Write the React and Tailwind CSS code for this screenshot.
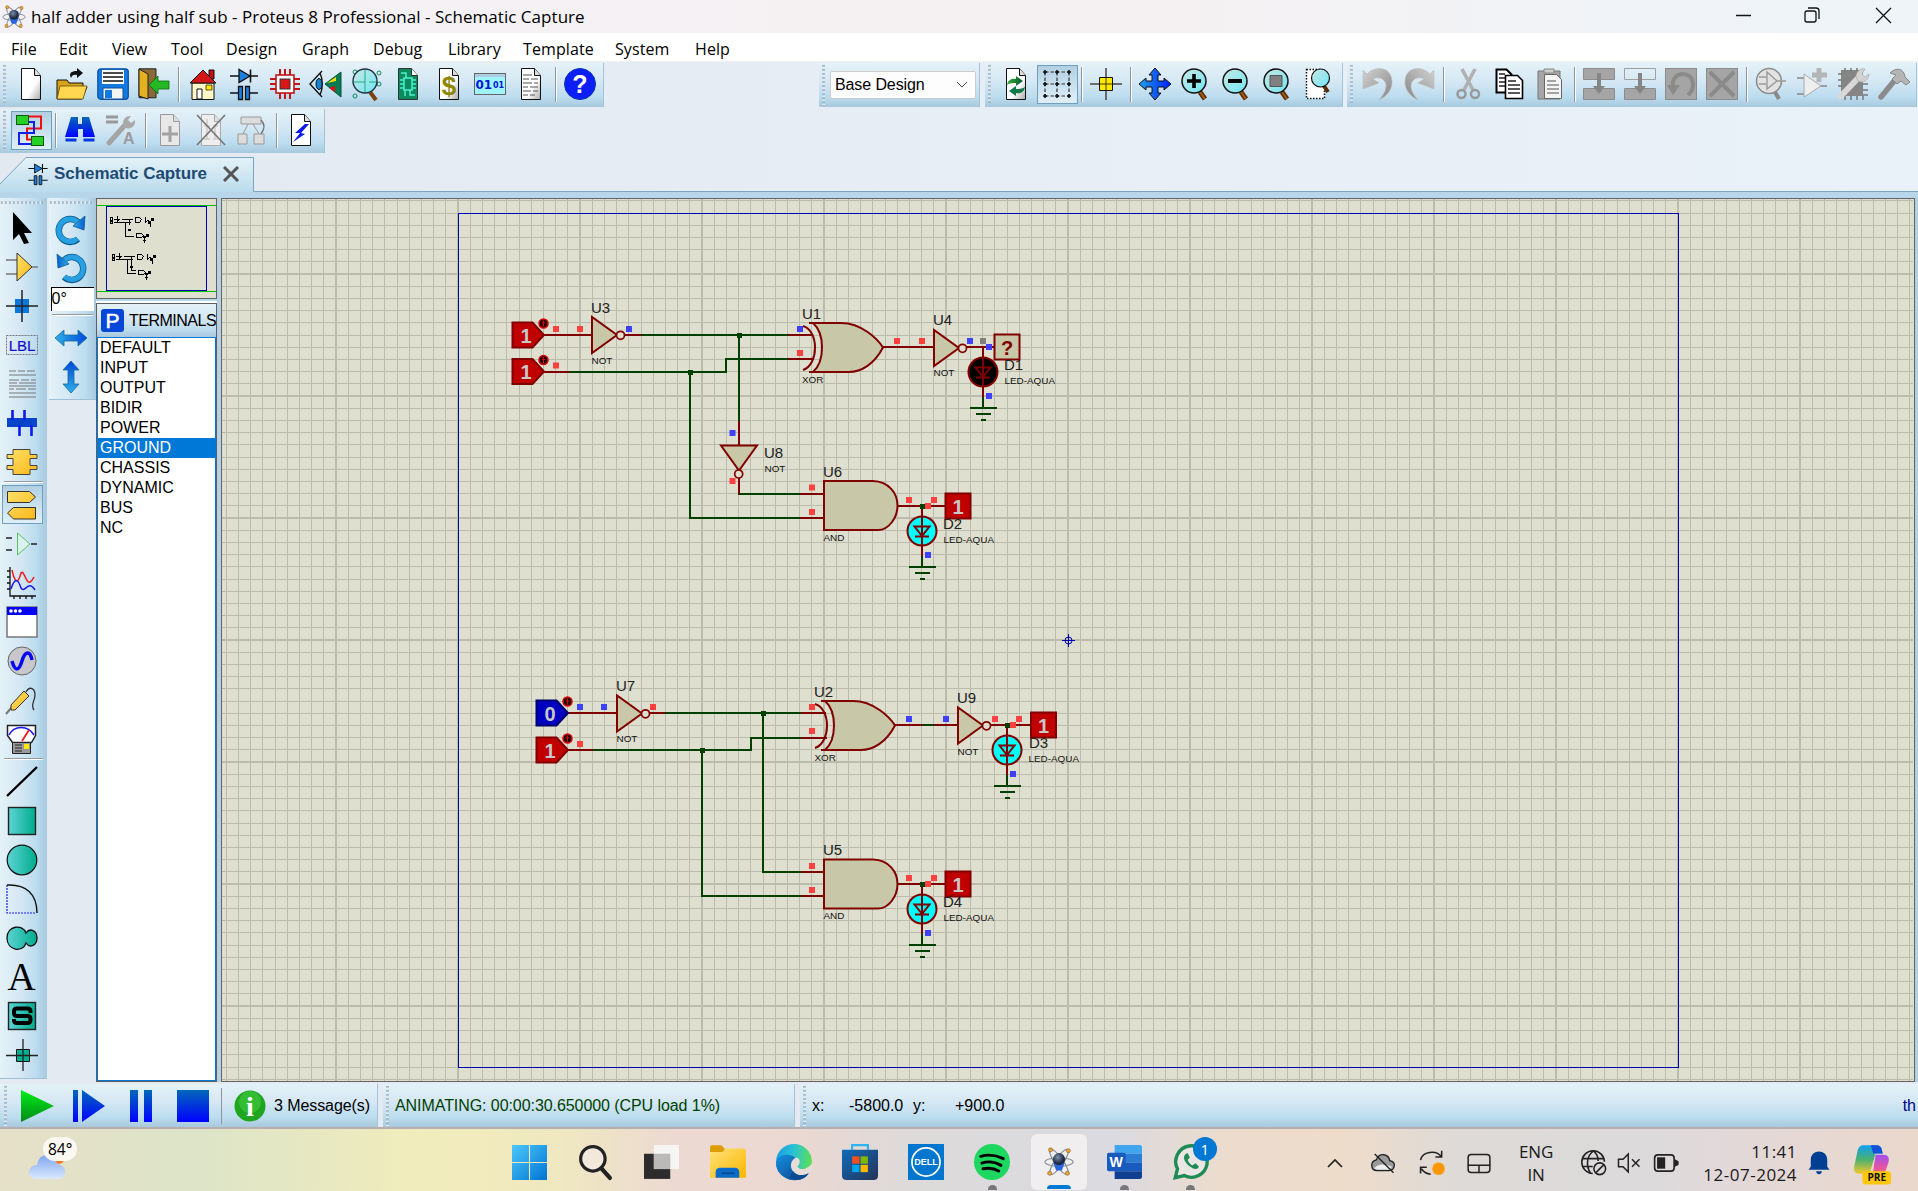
import React from "react";

const BAR_H = "bg-[linear-gradient(180deg,#e4f2f8_0%,#d6e8f4_40%,#bbdcef_78%,#a8c9dd_100%)]";
const BAR_V = "bg-[linear-gradient(90deg,#e4f2f8_0%,#d6e8f4_40%,#bbdcef_78%,#a8c9dd_100%)]";
const PRESSED = "bg-[linear-gradient(180deg,#b2cfe2_0%,#c4ddec_40%,#e0eff7_100%)] border border-[#6f9fbe]";

const Ic = ({ children, className = "w-8 h-8" }) => (
  <svg viewBox="0 0 32 32" className={className + " shrink-0 overflow-visible"} fill="none">{children}</svg>
);

const Defs = () => (
  <svg className="absolute w-0 h-0">
    <defs>
      <linearGradient id="page" x1="0" y1="0" x2="1" y2="1"><stop offset="0.6" stopColor="#fff" /><stop offset="1" stopColor="#aaa" /></linearGradient>
      <linearGradient id="yel" x1="0" y1="0" x2="1" y2="1"><stop offset="0" stopColor="#ffe169" /><stop offset="1" stopColor="#fbb81a" /></linearGradient>
      <linearGradient id="blu" x1="0" y1="0" x2="1" y2="0"><stop offset="0" stopColor="#1f9fe6" /><stop offset="1" stopColor="#0020ff" /></linearGradient>
      <linearGradient id="blv" x1="0" y1="0" x2="0" y2="1"><stop offset="0" stopColor="#0068b8" /><stop offset="1" stopColor="#0000ff" /></linearGradient>
      <linearGradient id="cyn" x1="0" y1="0" x2="1" y2="1"><stop offset="0" stopColor="#c8e8e6" /><stop offset="1" stopColor="#6fe6f2" /></linearGradient>
      <linearGradient id="teal" x1="0" y1="0" x2="1" y2="0"><stop offset="0" stopColor="#5dd3d3" /><stop offset="1" stopColor="#00ac8e" /></linearGradient>
      <linearGradient id="gry" x1="0" y1="0" x2="1" y2="1"><stop offset="0" stopColor="#d2d2d2" /><stop offset="1" stopColor="#858585" /></linearGradient>
      <linearGradient id="rot" x1="0" y1="0" x2="1" y2="0"><stop offset="0" stopColor="#2fb0ea" /><stop offset="1" stopColor="#0a5ccf" /></linearGradient>
      <linearGradient id="arh" x1="0" y1="0" x2="1" y2="0"><stop offset="0" stopColor="#2fb0e6" /><stop offset="1" stopColor="#0048dc" /></linearGradient>
      <linearGradient id="arv" x1="0" y1="1" x2="0" y2="0"><stop offset="0" stopColor="#2fb0e6" /><stop offset="1" stopColor="#0048dc" /></linearGradient>
      <linearGradient id="play" x1="0" y1="0" x2="0" y2="1"><stop offset="0" stopColor="#00ee18" /><stop offset="1" stopColor="#008a18" /></linearGradient>
      <linearGradient id="grn" x1="0" y1="0" x2="1" y2="0"><stop offset="0" stopColor="#3aae3c" /><stop offset="1" stopColor="#075a33" /></linearGradient>
      <radialGradient id="ball" cx="0.4" cy="0.35"><stop offset="0" stopColor="#7d92ab" /><stop offset="1" stopColor="#1b2942" /></radialGradient>
      <linearGradient id="win" x1="0" y1="0" x2="1" y2="1"><stop offset="0" stopColor="#4cc8fa" /><stop offset="1" stopColor="#0074d4" /></linearGradient>
      <linearGradient id="fold" x1="0" y1="0" x2="1" y2="1"><stop offset="0" stopColor="#ffe27a" /><stop offset="1" stopColor="#fbb600" /></linearGradient>
      <linearGradient id="edg" x1="0" y1="0.3" x2="1" y2="0.4"><stop offset="0" stopColor="#1b9de2" /><stop offset="0.5" stopColor="#2bc3d2" /><stop offset="1" stopColor="#5fe04f" /></linearGradient>
      <linearGradient id="edb" x1="0" y1="0" x2="1" y2="1"><stop offset="0" stopColor="#1590e0" /><stop offset="1" stopColor="#0b3f86" /></linearGradient>
      <linearGradient id="sto" x1="0" y1="0" x2="1" y2="1"><stop offset="0" stopColor="#0f6cbd" /><stop offset="1" stopColor="#263357" /></linearGradient>
      <linearGradient id="cop1" x1="0" y1="0" x2="0" y2="1"><stop offset="0" stopColor="#12a0f0" /><stop offset="0.5" stopColor="#49b170" /><stop offset="1" stopColor="#f7c72c" /></linearGradient>
      <linearGradient id="cop2" x1="0" y1="0" x2="0" y2="1"><stop offset="0" stopColor="#a24ff0" /><stop offset="0.6" stopColor="#e8559e" /><stop offset="1" stopColor="#f9824f" /></linearGradient>
      <linearGradient id="cld" x1="0" y1="0" x2="0" y2="1"><stop offset="0" stopColor="#7fa6ee" /><stop offset="1" stopColor="#dbe9ff" /></linearGradient>
    </defs>
  </svg>
);

const Page = ({ c = "#111", fill = "url(#page)", children }) => (
  <Ic><path d="M6.500 .5h13l6 7v24h-19z" fill={fill} stroke={c} /><path d="M19.500 .5v7h6" fill="#ddd" stroke={c} />{children}</Ic>
);

const Diode = ({ className }) => (
  <Ic className={className}>
    <path d="M2 8h28M22.500 1.500v13M2 25h8M22 25h8" stroke="#111" strokeWidth="1.600" />
    <path d="M11 1.500v13l11-6.500z" fill="#1c7fe0" stroke="#111" strokeWidth="1.300" />
    <path d="M10.500 18.500h4v13h-4zM17.500 18.500h4v13h-4z" fill="#1c7fe0" stroke="#111" strokeWidth="1.300" />
  </Ic>
);

const Zoom = ({ children }) => (
  <Ic><path d="M20 24l5 7" stroke="#5a2d00" strokeWidth="5" /><path d="M20 24l5 7" stroke="#a35a10" strokeWidth="2" /><circle cx="14" cy="13" r="12" fill="url(#cyn)" stroke="#111" strokeWidth="1.500" />{children}</Ic>
);

const Atom = ({ className }) => (
  <Ic className={className}>
    <g stroke="#8a8f98" strokeWidth="1.300"><ellipse cx="16" cy="16" rx="15" ry="4.500" /><ellipse cx="16" cy="16" rx="16" ry="4.500" transform="rotate(55 16 16)" /><ellipse cx="16" cy="16" rx="16" ry="4.500" transform="rotate(125 16 16)" /></g>
    <path d="M10 17h12l-3 8h-6z" fill="#2a66e0" /><circle cx="16" cy="13" r="6.500" fill="url(#ball)" />
    <g fill="#e8a33a" stroke="#7a4d10" strokeWidth=".5"><circle cx="7" cy="3" r="2.200" /><circle cx="26" cy="4" r="2.200" /><circle cx="6" cy="28" r="2.200" /><circle cx="25" cy="28" r="2.200" /></g>
  </Ic>
);

const Undo = ({ flip }) => (
  <Ic><g transform={flip ? "translate(32 0) scale(-1 1)" : undefined}><path d="M1 2v19l16-6-6-4c6-3 12 0 13 6 0 6-3 10-7 15 8-4 13-10 13-18 0-15-16-17-25-8z" fill="url(#gry)" stroke="#bdbdbd" strokeWidth=".6" /></g></Ic>
);

const Block = ({ children }) => (
  <Ic><rect x=".5" y=".5" width="31" height="31" fill="#a5a5a5" stroke="#8c8c8c" />{children}</Ic>
);

const icons = {
  new: <Page />,
  open: <Ic><path d="M1 31V12h10l2 3h14v4h4l-5 12z" fill="#d9a21c" stroke="#111" /><path d="M1 31l3-13h27l-4 13z" fill="#ffd750" stroke="#6a4a00" strokeWidth=".8" /><path d="M15 10c-3-6 2-7 6-7V0l6 5-6 5V7c-3-1-5 0-6 3z" fill="#111" /></Ic>,
  save: <Ic><rect x=".8" y=".8" width="30.500" height="30.500" rx="3" fill="#1179e0" stroke="#0a4fa0" strokeWidth="1.200" /><path d="M5 2h22v14H5z" fill="#fff" /><path d="M6 5h20M6 9h20M6 13h20" stroke="#111" strokeWidth="1.300" /><path d="M6 20h20v11H6z" fill="#f4f4f4" stroke="#0a4fa0" /><path d="M8 22h7v8H8z" fill="#1179e0" /></Ic>,
  exit: <Ic><path d="M1 .8h17v29H1z" fill="#8b6a3a" stroke="#222" /><path d="M1 1l9 5v25l-9-3z" fill="#e3b020" stroke="#222" /><path d="M11 17L20 8v5h11v8H20v5z" fill="#25b825" stroke="#0a6a0a" strokeWidth=".8" /></Ic>,
  house: <Ic><path d="M22 2h5v9h-5z" fill="#c01010" stroke="#111" /><path d="M5 15h22v16.500H5z" fill="#fff7c8" stroke="#111" /><path d="M3 15L16 2l13 13z" fill="#d41616" stroke="#111" /><path d="M10 21h5v10h-5z" fill="#fff" stroke="#111" /><path d="M19 17h6v5h-6z" fill="#ffe800" stroke="#111" strokeWidth=".7" /></Ic>,
  diode: <Diode />,
  chip: <Ic><path d="M11 1v30M16 1v30M21 1v30M1 11h30M1 16h30M1 21h30" stroke="#c01616" strokeWidth="2" /><rect x="7" y="7" width="18" height="18" fill="#fff" stroke="#c01616" strokeWidth="1.600" /><rect x="11" y="11" width="10" height="10" fill="#d81818" stroke="#333" /></Ic>,
  eye: <Ic><path d="M12 3L0 16l12 13M10 5c3 6 3 16 0 22" stroke="#111" strokeWidth="1.400" /><ellipse cx="9" cy="16" rx="3" ry="5.500" fill="#1584d8" stroke="#111" /><path d="M15 16L31 4v25z" fill="#0a7a52" stroke="#053" /><path d="M17 15l9-6v4z" fill="#f3e400" /><path d="M19 20l6-2v6z" fill="#e01010" /></Ic>,
  search: <Ic><g stroke="#0a8a5a"><circle cx="4" cy="28" r="2" /><circle cx="28" cy="5" r="2" /><circle cx="28" cy="16" r="2" /><circle cx="4" cy="4" r="2" /></g><path d="M19 24l6 8" stroke="#7a4310" strokeWidth="4" /><circle cx="14" cy="13" r="12" fill="url(#cyn)" stroke="#234" strokeWidth="1.400" /><path d="M3 14h11V2M14 14v10M18 14h7" stroke="#23a884" /></Ic>,
  green: <Ic><path d="M6.500 .5h13l6 7v24h-19z" fill="#0b8b5b" stroke="#333" /><path d="M19.500 .5v7h6" fill="#fff" stroke="#333" /><path d="M12 10h8v12h-8zM8 12h4M8 16h4M8 20h4M20 12h4M20 16h4M20 20h4M14 10V5h-5M18 22v5h5M13 22v6" stroke="#4ef0d0" strokeWidth="1.500" /></Ic>,
  dollar: <Page><text x="16" y="27" textAnchor="middle" className="font-bold text-[26px] [font-family:'Liberation_Sans',sans-serif]" fill="#8d8600">$</text></Page>,
  bits: <Ic><rect x=".5" y="5.500" width="31" height="21" fill="#9ff4fa" stroke="#666" /><path d="M1 6h30v3H1z" fill="#aecbe0" /><text x="1.500" y="21" className="font-bold text-[12px] [font-family:'DejaVu_Sans',sans-serif]" fill="#0014e0">01</text><text x="19" y="20" className="font-bold text-[8px] [font-family:'DejaVu_Sans',sans-serif]" fill="#0014e0">01</text></Ic>,
  text: <Page><path d="M8 7h9M8 11h6m2 0h7M8 15h9m2 0h4M8 19h5m2 0h8M8 23h8m2 0h5M8 27h5m2 0h5" stroke="#555" strokeWidth="1.200" /></Page>,
  help: <Ic><circle cx="16" cy="16" r="15.500" fill="#0c1df5" stroke="#0a38b0" /><text x="16" y="25" textAnchor="middle" className="font-bold text-[25px] [font-family:'Liberation_Sans',sans-serif]" fill="#fff">?</text></Ic>,
  route: <Ic><path d="M14 2.500h12v12H12v11h4" stroke="#f01010" strokeWidth="2" /><path d="M18 30H4V19h15V8H14" stroke="#1020f0" strokeWidth="2" /><rect x="1.500" y="1.500" width="12" height="9" fill="#25d125" stroke="#0a5a0a" /><rect x="16.500" y="22.500" width="12" height="9" fill="#25d125" stroke="#0a5a0a" /></Ic>,
  bino: <Ic><path d="M7 3h7v7h4V3h7l6 20H19V15h-5v8H1z" fill="url(#blv)" /><path d="M1 24h12v4H1zM19 24h12v4H19z" fill="#0637e6" stroke="#bfe2f2" strokeWidth="1" /></Ic>,
  wrench: <Ic><path d="M1 3h12M1 8h12" stroke="#999" strokeWidth="3" /><path d="M4 29L20 11" stroke="#a4a4a4" strokeWidth="5" strokeLinecap="round" /><path d="M19 13c-3-5 1-12 7-11l-3 4 3 3 4-3c1 6-5 11-11 7z" fill="#a9a9a9" /><text x="18" y="30" className="font-bold text-[16px] [font-family:'Liberation_Sans',sans-serif]" fill="#9b9b9b">A</text></Ic>,
  addpage: <Page c="#9a9a9a" fill="#e8e8e8"><path d="M16 12v16M8 20h16" stroke="#a2a2a2" strokeWidth="3" /></Page>,
  delpage: <Page c="#aaa" fill="#eee"><path d="M9 12h6m3 0h5M12 5v20M20 10v14M9 25h6m3 0h5" stroke="#bbb" /><path d="M2 1l28 30M30 1L2 31" stroke="#777" strokeWidth="1.700" /></Page>,
  hier: <Ic><g stroke="#999" fill="#dcdcdc"><path d="M5 3h20v7H5zM2 20h9v10H2zM18 20h10v10H18z" /><path d="M12 10L7 20M17 10l6 10" /></g><path d="M25 6c5 5 3 10 0 14" stroke="#777" strokeWidth="1.500" /></Ic>,
  bolt: <Page fill="#fff"><path d="M20 10l-10 9 5 0-7 9 12-8-4-1 8-9z" fill="#0a1af0" /></Page>,
  refresh: <Page><path d="M7 17c1-6 6-7 9-6V8l7 5-7 5v-3c-3 0-6 0-9 2z" fill="url(#grn)" /><path d="M25 19c-1 6-6 7-9 6v3l-7-5 7-5v3c3 0 6 0 9-2z" fill="#0f7a48" /></Page>,
  grid: <Ic><path d="M4 4h25M4 16h25M4 28h25M4 4v25M16 4v25M28 4v25" stroke="#333" strokeWidth="1.200" strokeDasharray="3.500 2" /><path d="M2 4h4M4 2v4M14 4h4M16 2v4M26 4h4M28 2v4M2 16h4M4 14v4M14 16h4M16 14v4M26 16h4M28 14v4M2 28h4M4 26v4M14 28h4M16 26v4M26 28h4M28 26v4" stroke="#111" strokeWidth="1.600" /></Ic>,
  cross: <Ic><path d="M0 16h32M16 0v32" stroke="#444" strokeWidth="1.500" /><path d="M9.500 9.500h13v13h-13z" fill="#ffe800" stroke="#111" /><path d="M9 16h14M16 9v14" stroke="#111" strokeWidth=".8" /></Ic>,
  move: <Ic><path d="M16 0l6 7h-3v6h6v-3l7 6-7 6v-3h-6v6h3l-6 7-6-7h3v-6H7v3l-7-6 7-6v3h6V7h-3z" fill="url(#blu)" stroke="#111" strokeWidth="1" /></Ic>,
  zin: <Zoom><path d="M7 13h14M14 6v14" stroke="#000" strokeWidth="3.600" /></Zoom>,
  zout: <Zoom><path d="M7 13h14" stroke="#000" strokeWidth="4" /></Zoom>,
  zall: <Zoom><path d="M8 7.500h12v11H8z" fill="#808080" stroke="#555" /></Zoom>,
  zarea: <Ic><path d="M3.500 1.500h18v29h-18z" fill="#fff" stroke="#111" strokeWidth="1.500" strokeDasharray="1.500 1.500" /><path d="M21 18l4 6" stroke="#5a2d00" strokeWidth="4" /><circle cx="17.500" cy="10" r="9" fill="url(#cyn)" stroke="#111" strokeWidth="1.200" /></Ic>,
  undo: <Undo />,
  redo: <Undo flip />,
  cut: <Ic><path d="M10 1l11 21M23 1L12 22" stroke="#b0b0b0" strokeWidth="3.500" /><circle cx="9.500" cy="26" r="4" stroke="#999" strokeWidth="2.500" /><circle cx="23" cy="26" r="4" stroke="#999" strokeWidth="2.500" /></Ic>,
  copy: <Ic><path d="M3.500 1.500h10l5 5v18h-15z" fill="#fff" stroke="#000" strokeWidth="2" /><path d="M6 6h6M6 10h6M6 14h6M6 18h6" stroke="#223" strokeWidth="1.500" /><path d="M12.500 7.500h12l5 5v18h-17z" fill="#fff" stroke="#000" strokeWidth="1.600" /><path d="M15 13h8M15 17h12M15 21h12M15 25h12" stroke="#222" strokeWidth="1.600" /></Ic>,
  paste: <Ic><path d="M4 3h22v28H4z" fill="#a6a6a6" stroke="#777" /><path d="M10 1h10v4H10z" fill="#ccc" stroke="#888" /><path d="M10.500 6.500h12l5 5v19h-17z" fill="#f4f4f4" stroke="#666" /><path d="M13 13h9M13 17h12M13 21h12M13 25h12" stroke="#888" strokeWidth="1.600" /></Ic>,
  bcopy: <Ic><path d="M.5.500h31v11H.5zM.5 20.500h31v11H.5z" fill="#a5a5a5" stroke="#8c8c8c" /><path d="M14 5h4v13h4l-6 8-6-8h4z" fill="#858585" /></Ic>,
  bmove: <Ic><path d="M.5.500h31v11H.5z" stroke="#a0a0a0" /><path d="M.5 20.500h31v11H.5z" fill="#a5a5a5" stroke="#8c8c8c" /><path d="M14 5h4v13h4l-6 8-6-8h4z" fill="#858585" /></Ic>,
  brot: <Block><path d="M8 19C5 3 28 1 28 17q0 6-5 10" stroke="#8a8a8a" strokeWidth="4" /><path d="M2 17h13l-7 10z" fill="#8a8a8a" /></Block>,
  bdel: <Block><path d="M4 4l24 24M28 4L4 28" stroke="#8a8a8a" strokeWidth="4" /></Block>,
  pick: <Ic><path d="M20 24l4 7" stroke="#8a8a8a" strokeWidth="4" /><circle cx="14" cy="13" r="12.500" fill="#e2e2e2" stroke="#8c8c8c" strokeWidth="1.500" /><path d="M4 9h7M4 16h7M21 13h10M12 4v17l10-8z" stroke="#999" strokeWidth="1.400" /></Ic>,
  mk: <Ic><path d="M1 10h7M1 26h7M24 18h7" stroke="#888" strokeWidth="1.500" /><path d="M8 6v23l17-11z" fill="#eee" stroke="#aaa" /><path d="M23 0v14M16 7h15" stroke="#b5b5b5" strokeWidth="5" /></Ic>,
  pack: <Ic><path d="M4 2h22v26H4z" fill="#858585" /><path d="M8 0v3M14 0v3M20 0v3M8 28v4M14 28v4M20 28v4M26 28v4M1 6h4M1 12h4M1 18h4M26 16h5M26 22h5M26 27h5" stroke="#777" strokeWidth="1.500" /><path d="M4 28L23 8" stroke="#d8d8d8" strokeWidth="6" strokeLinecap="round" /><path d="M19 9c0-6 5-9 9-8l-3 5 3 3 4-3c0 6-6 10-11 7z" fill="#d2d2d2" stroke="#999" strokeWidth=".5" /></Ic>,
  hammer: <Ic><path d="M17 12L3 29" stroke="#8b8b8b" strokeWidth="5.500" strokeLinecap="round" /><path d="M12 5c6-6 14-5 15 4l5 5-4 3-5-4-4 3-5-5 4-4z" fill="#b5b5b5" stroke="#888" /></Ic>,
};

const Grip = () => <span className="w-[11px] self-stretch my-px shrink-0 pl-[3px]"><span className="block w-[3px] h-full bg-[repeating-linear-gradient(180deg,#fff_0px,#8fa3b3_2px,transparent_3px,transparent_4px)]" /></span>;
const Sep = () => <span className="w-[8px] h-[35px] shrink-0 flex justify-center"><span className="w-[2px] h-full bg-[#8e969c] border-r border-white" /></span>;

const Bar = ({ names, pressed, className }) => (
  <div className={"flex items-center shrink-0 pb-[2px] border-r border-[#a3c3d7] " + BAR_H + " " + className}>
    <Grip />
    {names.map((n, i) => n === "|" ? <Sep key={i} /> : (
      <span key={i} className={"w-[41px] h-[39px] shrink-0 flex items-center justify-center pr-px " + (n === pressed ? PRESSED : "")}>{icons[n]}</span>
    ))}
  </div>
);

const side = {
  arrow: <Ic><path d="M7 0v28l6-6 5 10 5-1-5-10h8z" fill="#000" /></Ic>,
  comp: <Ic><path d="M0 9h11M0 23h11M24 16h8" stroke="#777" strokeWidth="1.600" /><path d="M11 2v28l15-14z" fill="url(#yel)" stroke="#333" /></Ic>,
  junc: <Ic><path d="M9 9h14v14H9z" fill="#0a78dc" /><path d="M0 16h32M16 0v32" stroke="#222" strokeWidth="1.500" /></Ic>,
  lbl: <Ic><rect x=".5" y="6.500" width="31" height="19" stroke="#777" strokeDasharray="2 1" /><text x="16" y="22" textAnchor="middle" className="text-[15px] [font-family:'Liberation_Sans',sans-serif]" fill="#1010c8" stroke="#1010c8" strokeWidth=".2">LBL</text></Ic>,
  script: <Ic><path d="M3 3h7m2 0h7m2 0h8M3 7h27M3 12h10m2 0h8m2 0h5M3 15h8m2 0h17M3 18h27M3 21h5m2 0h10m2 0h8M3 25h27M3 29h27" stroke="#777" strokeWidth="1.200" /></Ic>,
  bus: <Ic><path d="M1 11h30v9H1z" fill="#0845c8" /><path d="M6.500 3v10M18.500 3v10M13.500 18v11M25.500 18v11" stroke="#0a1af0" strokeWidth="2.600" /></Ic>,
  sub: <Ic><path d="M7 3.500h17v5h7v4h-7v7h7v4h-7v5H7v-5H1v-4h6v-7H1v-4h6z" fill="url(#yel)" stroke="#444" /></Ic>,
  term: <Ic><path d="M1.500 2.500h22l6 5.500-6 5.500h-22zM29.500 18.500h-22l-6 5.500 6 6h22z" fill="url(#yel)" stroke="#333" /></Ic>,
  pin: <Ic><path d="M0 10h6M0 22h6M25 16h6" stroke="#222" strokeWidth="1.600" /><path d="M11.500 5v22L24 16z" stroke="#55c865" fill="#ddf0ee" /></Ic>,
  graph: <Ic><path d="M4 0v29h26M1 4h3M1 10h3M1 16h3M1 22h3M8 29v3M14 29v3M20 29v3M26 29v3" stroke="#111" strokeWidth="1.300" /><path d="M6 3c3 14 6 14 9 3 3-4 5 11 9 9 2-1 3-3 4-5" stroke="#f01818" strokeWidth="1.500" /><path d="M5 22c4-12 7-10 10-1 4 6 7-9 14 2" stroke="#1818f0" strokeWidth="1.500" /></Ic>,
  window: <Ic><rect x="1" y="1" width="30" height="30" fill="#fff" stroke="#777" strokeWidth="1.500" /><path d="M1 1h30v8H1z" fill="#0404f4" /><g fill="#fff"><circle cx="5" cy="5" r="1.800" /><circle cx="9.500" cy="5" r="1.800" /><circle cx="14" cy="5" r="1.800" /></g></Ic>,
  sine: <Ic><circle cx="16" cy="16" r="14" fill="#c8c8cc" stroke="#666" /><path d="M6 16c3 11 7 10 10 0s8-11 10-1" stroke="#0808f4" strokeWidth="3.500" /></Ic>,
  probe: <Ic><path d="M0 30l6-7" stroke="#777" strokeWidth="2" /><path d="M5 21L18 7l5 5L9 26H5z" fill="url(#yel)" stroke="#333" /><path d="M20 8c4-7 9-3 9 3s-5 10-1 15" stroke="#333" strokeWidth="1.300" /></Ic>,
  meter: <Ic><path d="M1.500 2.500h28v10l-4 7h-19l-5-7z" fill="#fff" stroke="#222" strokeWidth="1.500" /><path d="M3 12C8 2 22 2 28 12" stroke="#1818f0" strokeWidth="1.500" /><path d="M16 18l7-11" stroke="#f01818" strokeWidth="1.800" /><path d="M6.500 19.500h18v11h-18z" fill="#999" stroke="#222" /><path d="M9 22h7M9 25h7M9 28h7" stroke="#222" /><path d="M18 21h5v5h-5z" fill="#ffe800" /></Ic>,
  line: <Ic><path d="M1 30L31 1" stroke="#000" strokeWidth="2.400" /></Ic>,
  box: <Ic><rect x="2.500" y="2.500" width="27" height="27" fill="url(#teal)" stroke="#222" strokeWidth="1.400" /></Ic>,
  circ: <Ic><circle cx="16" cy="16" r="14.800" fill="url(#teal)" stroke="#111" strokeWidth="1.200" /></Ic>,
  arc: <Ic><path d="M1 2v28h29" stroke="#2020e0" strokeWidth="1.200" strokeDasharray="2 1" /><path d="M1 2C20 1 31 11 31 30" stroke="#111" strokeWidth="1.400" /></Ic>,
  path: <Ic><path d="M20 11c-3-9-19-8-19 5s16 15 19 5c4 6 11 2 11-5s-7-11-11-5z" fill="url(#teal)" stroke="#111" strokeWidth="1.300" /></Ic>,
  A: <span className="text-[39px] leading-8 [font-family:'Liberation_Serif',serif] text-black">A</span>,
  S: <Ic><rect x="2.500" y="2.500" width="27" height="27" fill="url(#teal)" stroke="#222" strokeWidth="1.400" /><path d="M24.500 13v-2q0-2.500-3-2.500H11q-3 0-3 3v1.500q0 3 3 3h10.500q3 0 3 3v1q0 3-3 3H11q-3 0-3-3v-1" stroke="#000" strokeWidth="4" /></Ic>,
  mark: <Ic><path d="M10.500 10.500h13v12h-13z" fill="#00b090" stroke="#111" /><path d="M0 16.500h32M17 0v32" stroke="#222" strokeWidth="1.300" /></Ic>,
};
const sideNames = ["arrow", "comp", "junc", "lbl", "script", "bus", "sub", "-3", "term", "pin", "graph", "window", "sine", "probe", "meter", "-4", "line", "box", "circ", "arc", "path", "A", "S", "mark"];

/* ---- schematic ---- */
const R = "#800000";
const G = "#004000";
const seg = (d, c, k) => <path key={k} d={d} stroke={c} strokeWidth="2" fill="none" shapeRendering="crispEdges" />;
const T = ({ x, y, children }) => <text x={x} y={y} className="text-[15px] [font-family:'Liberation_Sans',sans-serif]" fill="#222">{children}</text>;
const S = ({ x, y, children }) => <text x={x} y={y} className="text-[9.900px] [font-family:'Liberation_Sans',sans-serif]" fill="#111">{children}</text>;
const Mk = ({ pts, c }) => pts.map(([x, y], i) => <rect key={i} x={x - 3} y={y - 3} width="6" height="6" fill={c} />);
const J = ({ x, y }) => <rect x={x - 2.500} y={y - 2.500} width="5" height="5" fill={G} />;

const State = ({ x, y, v }) => (
  <g>
    <path d={`M${x} ${y - 12.500}h20l11.500 12.500l-11.500 12.500h-20z`} fill={v ? "#c00000" : "#0000c0"} stroke={v ? R : "#000070"} strokeWidth="2" />
    <text x={x + 13.500} y={y + 7.500} textAnchor="middle" className="font-bold text-[20px] [font-family:'Liberation_Sans',sans-serif]" fill="#c8c8c8">{v}</text>
    <circle cx={x + 31} cy={y - 11.500} r="4.500" fill="#200000" stroke="#e00000" strokeWidth="1.500" />
    <path d={`M${x + 31} ${y - 14.500}v6M${x + 29.500} ${y - 12}h3`} stroke="#e00000" />
  </g>
);
const Not = ({ x, y }) => <g fill="#c8c8a8" stroke={R} strokeWidth="2"><path d={`M${x} ${y - 18}v36L${x + 25} ${y}z`} /><circle cx={x + 28.500} cy={y + 0.300} r="4" fill="#dfdfcf" strokeWidth="1.700" /></g>;
const Xor = ({ x, y }) => (
  <g stroke={R} strokeWidth="2">
    <path d={`M${x} ${y - 24.500}h32C${x + 53} ${y - 24.500} ${x + 69} ${y - 8} ${x + 74} ${y}C${x + 65} ${y + 17} ${x + 52} ${y + 24.500} ${x + 40} ${y + 24.500}h-40h4C${x + 16} ${y + 14} ${x + 16} ${y - 14} ${x + 4} ${y - 24.500}z`} fill="#c8c8a8" />
    <path d={`M${x - 6} ${y - 21.500}C${x + 10} ${y - 17} ${x + 10} ${y + 17} ${x - 6} ${y + 22.500}`} fill="none" />
  </g>
);
const And = ({ x, y }) => <path d={`M${x} ${y - 24.500}h49C${x + 65} ${y - 24} ${x + 73.500} ${y - 12} ${x + 73.500} ${y}S${x + 65} ${y + 24.500} ${x + 54} ${y + 24.500}h-54z`} fill="#c8c8a8" stroke={R} strokeWidth="2" />;
const Out = ({ x, y, v }) => (
  <g><rect x={x} y={y - 12.500} width="25" height="25" fill={v === "?" ? "#c8c8a8" : "#c00000"} stroke={R} strokeWidth="2" />
    <text x={x + 12.500} y={y + 7.500} textAnchor="middle" className="font-bold text-[20px] [font-family:'Liberation_Sans',sans-serif]" fill={v === "?" ? R : "#c8c8c8"}>{v}</text></g>
);
const Led = ({ x, y, on }) => (
  <g>
    {seg(`M${x} ${y}V${y + 51}`, R)}{seg(`M${x} ${y + 50}V${y + 61}`, G)}
    {seg(`M${x - 13.500} ${y + 61}h27M${x - 7.500} ${y + 67}h15M${x - 2.500} ${y + 73}h5`, G)}
    <circle cx={x} cy={y + 25} r="14.500" fill={on ? "#00ffff" : "#000"} stroke={R} strokeWidth="2" />
    <path d={`M${x} ${y + 8}v32M${x - 7.500} ${y + 20.500}h15l-7.500 9.500zM${x - 7} ${y + 30.500}h14`} stroke={R} strokeWidth="2" fill="none" />
    <Mk pts={[[x + 6, y + 49]]} c="#4040ff" />
    <S x={x + 21.500} y={y + 37}>LED-AQUA</S>
  </g>
);

const gridLines = () => {
  const out = [];
  for (let k = -70; k <= 70; k++) {
    const x = Math.round(1068 + 12.2 * k - 0.4), y = Math.round(640 + 12.2 * k - 0.4);
    const w = k % 10 === 0 ? 2 : 1;
    if (x > 222 && x < 1912) out.push(<rect key={"x" + k} x={w === 2 ? x - 1 : x} y="199" width={w} height="882" />);
    if (y > 199 && y < 1080) out.push(<rect key={"y" + k} y={w === 2 ? y - 1 : y} x="222" height={w} width="1691" />);
  }
  return out;
};

const Schematic = () => (
  <svg viewBox="222 199 1692 882" className="block w-[1692px] h-[882px]">
    <rect x="222" y="199" width="1692" height="882" fill="#dfdfcf" />
    <g fill="#bcbcac" shapeRendering="crispEdges">{gridLines()}</g>
    <rect x="458.500" y="213.500" width="1220" height="854" fill="none" stroke="#0000b0" />
    <g stroke="#0000b0" fill="none"><circle cx="1068.500" cy="640.500" r="3.500" /><path d="M1062 640.500h13M1068.500 634v13" /></g>

    {seg("M543 335H592M625 335H642M787 335H813M543 372H569M787 359H814M739 420V445M739 478V495M799 494H824M799 518H824M883 347H934M967 347H995M897 506H946", R)}
    {seg("M641 335H788M569 372H727M726 373V359M725 359H788M739 335V421M739 494H800M690 372V519M689 518H800", G)}
    <J x={739.500} y={335.500} /><J x={690.500} y={372.500} />
    <State x={512.500} y={335} v={1} /><State x={512.500} y={371.500} v={1} />
    <Not x={592} y={335} /><Xor x={809} y={347.500} /><Not x={934} y={348} /><And x={824} y={505.500} />
    <g transform="translate(739 445.500) rotate(90)"><Not x={0} y={0} /></g>
    <Led x={983} y={347} /><Led x={922} y={506} on />
    <J x={922.500} y={506.500} />
    <Out x={994.500} y={347} v="?" /><Out x={945.500} y={506} v="1" />
    <Mk c="#ff4040" pts={[[556, 329], [580, 329], [556, 365.500], [732.500, 481], [800, 353], [897, 341], [922, 341], [812, 487.500], [812, 512], [909, 500], [934, 500], [928, 506]]} />
    <Mk c="#4040ff" pts={[[629, 329], [732.500, 433], [800, 329], [970, 341], [989, 347]]} />
    <Mk c="#808080" pts={[[983, 341]]} />
    <T x="591" y="313">U3</T><S x="591.500" y="364">NOT</S>
    <T x="802" y="319">U1</T><S x="802" y="383">XOR</S>
    <T x="933" y="325">U4</T><S x="933.500" y="376">NOT</S>
    <T x="764" y="458">U8</T><S x="764.500" y="472">NOT</S>
    <T x="823" y="477">U6</T><S x="823.500" y="541">AND</S>
    <T x="1004" y="370">D1</T><T x="943" y="529">D2</T>

    {seg("M568 713H617M650 713H665M800 713H826M568 750H593M800 738H827M800 872H824M800 896H824M895 725H922M934 725H959M991 725H1031M897 884H946", R)}
    {seg("M665 713H801M593 750H752M751 751V738M750 738H801M763 713V873M762 872H801M702 750V897M701 896H801M922 725H934", G)}
    <J x={763.500} y={713.500} /><J x={702.500} y={750.500} />
    <State x={536.500} y={713} v={0} /><State x={536.500} y={750} v={1} />
    <Not x={617} y={713.500} /><Xor x={821} y={725.500} /><Not x={958} y={725.500} /><And x={824} y={884} />
    <Led x={1007} y={725} on /><Led x={922} y={884} on />
    <J x={1007.500} y={725.500} /><J x={922.500} y={884.500} />
    <Out x={1031} y={725} v="1" /><Out x={945.500} y={884} v="1" />
    <Mk c="#ff4040" pts={[[653, 707], [580, 744], [812, 707], [812, 731], [995, 719], [1019, 719], [1013, 725], [812, 866], [812, 890], [909, 878], [934, 878], [928, 884]]} />
    <Mk c="#4040ff" pts={[[580, 707], [604, 707], [909, 719], [946, 719]]} />
    <T x="616" y="691">U7</T><S x="616.500" y="742">NOT</S>
    <T x="814" y="697">U2</T><S x="814.500" y="761">XOR</S>
    <T x="957" y="703">U9</T><S x="957.500" y="755">NOT</S>
    <T x="823" y="855">U5</T><S x="823.500" y="919">AND</S>
    <T x="1029" y="748">D3</T><T x="943" y="907">D4</T>
  </svg>
);

const Mini = () => (
  <svg viewBox="0 0 119 99" className="block w-[119px] h-[99px]">
    <rect width="119" height="99" fill="#dfdfcf" />
    <path d="M0 6.500h119M0 92.500h119" stroke="#00c000" />
    <rect x="9.500" y="7.500" width="100" height="84" fill="none" stroke="#0000b0" />
    {[[0, 0], [2, 37]].map(([dx, dy], i) => (
      <g key={i} transform={`translate(${dx} ${dy})`} stroke="#000" fill="none" shapeRendering="crispEdges">
        <path d="M13.500 18.500h2v3h-2zM13.500 22.500h2v2h-2zM17 20.500h5M25 20.500h11M17 23.500h17M20.500 17v5l2-2M28.500 24v13h8M32.500 21v5M38.500 18.500h4l2 2-2 3h-4zM39.500 34.500h5l2 2-2 2h-5zM48.500 18v5l3-2M47.500 38v6M46 41.500h3M53.500 22v6" />
        <path d="M54 19h3v3h-3zM51 22h3v3h-3zM49 35h3v3h-3zM46 37h3v2h-3zM31 30h3v2h-3z" fill="#000" stroke="none" />
        {i === 1 && <path d="M32.500 21v13h4" />}
      </g>
    ))}
  </svg>
);

const Rot = ({ flip }) => (
  <Ic><g transform={flip ? "translate(32 0) scale(-1 1)" : undefined}><path d="M23 25a11.500 11.500 0 1 1 0-17" stroke="#0a5a90" strokeWidth="6.400" /><path d="M18 12l11 4 1-14z" fill="url(#rot)" stroke="#0a5a90" strokeWidth=".8" /><path d="M22.500 24.500a11.200 11.200 0 1 1 0-16.500" stroke="#289fe0" strokeWidth="5" /></g></Ic>
);

const menus = [["File", "w-[48px]"], ["Edit", "w-[53px]"], ["View", "w-[59px]"], ["Tool", "w-[55px]"], ["Design", "w-[76px]"], ["Graph", "w-[71px]"], ["Debug", "w-[75px]"], ["Library", "w-[75px]"], ["Template", "w-[92px]"], ["System", "w-[80px]"], ["Help", "w-[60px]"]];
const terminals = ["DEFAULT", "INPUT", "OUTPUT", "BIDIR", "POWER", "GROUND", "CHASSIS", "DYNAMIC", "BUS", "NC"];

const tasks = [
  [<Ic className="w-[35px] h-[35px]"><path d="M0 0h15.500v15.500H0zM16.500 0H32v15.500H16.500zM0 16.500h15.500V32H0zM16.500 16.500H32V32H16.500z" fill="url(#win)" /></Ic>],
  [<Ic className="w-[34px] h-[34px]"><circle cx="14" cy="13" r="11.500" fill="#f2e9dc" stroke="#222" strokeWidth="3" /><path d="M22 22l8 9" stroke="#222" strokeWidth="4" strokeLinecap="round" /></Ic>],
  [<Ic className="w-[35px] h-[35px]"><path d="M0 8h24v23H0z" fill="#2c2c2c" /><path d="M9 0h23v22H9z" fill="#f6f6f6" fillOpacity=".93" /><path d="M9 8h15v14H9z" fill="#bcbab8" /></Ic>],
  [<Ic className="w-[36px] h-[36px]"><path d="M0 3q0-2 2-2h8l3 3v5H0z" fill="#dd9c00" /><path d="M0 7h11l3-3h16q2 0 2 2v24H0z" fill="url(#fold)" /><path d="M5 30v-5q0-4 4-4h13q4 0 4 4v5z" fill="#0a6cc8" /><path d="M10 26h12" stroke="#084a90" strokeWidth="1.500" /></Ic>],
  [<Ic className="w-[36px] h-[36px]"><circle cx="16" cy="16" r="16" fill="url(#edg)" /><path d="M0 17C1 8 14 8 18 13c-4 1-6 6-3 11 3 4 9 5 14 2-5 7-15 8-22 3-5-3-7-8-7-12z" fill="url(#edb)" /><path d="M18 12c4 1 4 5 1 8 1 3 8 4 13-3l1 6-4 3c-5 3-11 2-14-2s-2-10 3-12z" fill="#e8dcd6" /><path d="M15 24c4 6 12 3 14 2-4 7-12 7-17 4z" fill="#0c4a94" /></Ic>],
  [<Ic className="w-[36px] h-[36px]"><path d="M9 5V1h14v4" stroke="#2cb5f0" strokeWidth="2" /><path d="M0 5h32v23q0 4-4 4H4q-4 0-4-4z" fill="url(#sto)" /><path d="M9 11h6.500v6.500H9z" fill="#f25022" /><path d="M16.500 11H23v6.500h-6.500z" fill="#7fba00" /><path d="M9 18.500h6.500V25H9z" fill="#00a4ef" /><path d="M16.500 18.500H23V25h-6.500z" fill="#ffb900" /></Ic>],
  [<Ic className="w-[36px] h-[36px]"><path d="M0 0h32v32H0z" fill="#0076ce" /><circle cx="16" cy="16" r="12.500" stroke="#fff" strokeWidth="1.500" /><text x="16" y="19" textAnchor="middle" className="font-bold text-[8px] [font-family:'Liberation_Sans',sans-serif]" fill="#fff">DELL</text></Ic>],
  [<Ic className="w-[36px] h-[36px]"><circle cx="16" cy="16" r="16" fill="#1ed760" /><path d="M6 11c7-2 14-1 20 2M7 17c6-2 12-1 17 2M8 22c5-1 9-1 14 2" stroke="#000" strokeWidth="2.600" strokeLinecap="round" /></Ic>, "dot"],
  [<Atom className="w-[34px] h-[30px]" />, "active"],
  [<Ic className="w-[35px] h-[35px]"><path d="M7 0h23q2 0 2 2v6H7z" fill="#41a5ee" /><path d="M7 8h25v8H7z" fill="#2b7cd3" /><path d="M7 16h25v8H7z" fill="#185abd" /><path d="M7 24h25v5q0 2-2 2H7z" fill="#103f91" /><rect x="0" y="7" width="17" height="17" rx="1.500" fill="#185abd" /><text x="8.500" y="20" textAnchor="middle" className="font-bold text-[13px] [font-family:'Liberation_Sans',sans-serif]" fill="#fff">W</text></Ic>, "dot"],
  [<Ic className="w-[36px] h-[36px]"><path d="M2 30l2-8A14 14 0 1 1 10 28z" fill="#e9e6e4" stroke="#1f8b55" strokeWidth="3" /><path d="M11 9c-3 3 0 8 4 11 4 3 7 3 8 0l-3-3-3 2c-2-1-3-3-4-5l2-2-2-4z" fill="#1f8b55" /></Ic>, "badge"],
];

export default function App() {
  return (
    <div className="w-[1918px] h-[1191px] flex flex-col overflow-hidden bg-[#e4eaf1] text-black [font-family:'Liberation_Sans',Arial,sans-serif]">
      <Defs />
      <div className="h-[33px] shrink-0 flex items-center bg-[linear-gradient(90deg,#f4f1f6_0%,#f5f1f2_60%,#f0f3f7_85%,#eef4f8_100%)]">
        <Atom className="w-6 h-[26px] ml-[2px]" />
        <span className="ml-[5px] text-[17px] whitespace-nowrap tracking-[0.04px] [font-family:'Open_Sans',sans-serif]">half adder using half sub - Proteus 8 Professional - Schematic Capture</span>
        <svg viewBox="0 0 170 20" className="ml-auto mr-[26px] w-[170px] h-5 mb-px" fill="none" stroke="#111" strokeWidth="1.300">
          <path d="M14 9.500h15M154 2l15 15M169 2l-15 15" /><rect x="83" y="5" width="11" height="11" rx="2" /><path d="M86 2h8q3 0 3 3v8" />
        </svg>
      </div>
      <div className="h-[28px] shrink-0 flex items-center bg-white pl-[11px] pt-[3px] text-[16px] tracking-[0.1px] [font-family:'Open_Sans',sans-serif]">
        {menus.map(([m, w]) => <span key={m} className={w + " shrink-0"}>{m}</span>)}
      </div>

      <div className="h-[46px] shrink-0 flex pt-px border-t border-[#f0f0f0] bg-[linear-gradient(90deg,#e3e9f0,#eaf2f9)]">
        <Bar className="w-[604px]" names={["new", "open", "save", "exit", "|", "house", "diode", "chip", "eye", "search", "green", "dollar", "bits", "text", "|", "help"]} />
        <div className={"ml-[215px] w-[161px] flex items-center border-r border-[#a3c3d7] " + BAR_H}>
          <Grip />
          <div className="w-[146px] h-[28px] bg-[#fdfdfd] border border-[#ccc] rounded-xs flex items-center justify-between pl-[4px] pr-[7px] text-[16px] tracking-[-0.1px]">
            <span>Base Design</span>
            <svg viewBox="0 0 12 8" className="w-3 h-2" fill="none" stroke="#444"><path d="M1 1l5 5 5-5" /></svg>
          </div>
        </div>
        <Bar className="ml-[5px] w-[358px]" pressed="grid" names={["refresh", "grid", "|", "cross", "|", "move", "zin", "zout", "zall", "zarea"]} />
        <Bar className="ml-[4px] w-[570px]" names={["undo", "redo", "|", "cut", "copy", "paste", "|", "bcopy", "bmove", "brot", "bdel", "|", "pick", "mk", "pack", "hammer"]} />
      </div>
      <div className="h-[46px] shrink-0 flex pt-[2px] bg-[linear-gradient(90deg,#e3e9f0,#eaf2f9)]">
        <Bar className="w-[325px]" pressed="route" names={["route", "|", "bino", "wrench", "|", "addpage", "delpage", "hier", "|", "bolt"]} />
      </div>
      <div className="h-[39px] shrink-0 flex items-end relative border-b border-[#7ba4c0] bg-[linear-gradient(90deg,#e3e9f0,#eaf2f9)]">
        <svg viewBox="0 0 254 35" className="absolute left-0 -bottom-px w-[254px] h-[35px]">
          <defs><linearGradient id="tab" x1="0" y1="0" x2="0" y2="1"><stop offset="0" stopColor="#e4f2f8" /><stop offset="1" stopColor="#bbdbed" /></linearGradient></defs>
          <path d="M0 35V27L26 .5H253.500V35z" fill="url(#tab)" /><path d="M0 27L26 .5H253.500V34.500" fill="none" stroke="#7ba4c0" />
        </svg>
        <div className="relative flex items-center h-[34px] pl-[27px]">
          <Diode className="w-[22px] h-6" />
          <span className="ml-[5px] w-[153px] whitespace-nowrap font-bold text-[17px] tracking-[-0.06px] text-[#1e4a73]">Schematic Capture</span>
          <svg viewBox="0 0 16 16" className="ml-[16px] w-4 h-4" stroke="#555" strokeWidth="3"><path d="M1 1l14 14M15 1L1 15" /></svg>
        </div>
      </div>
      <div className="h-[6px] shrink-0 bg-[#b8d6ea]" />

      <div className="h-[884px] shrink-0 flex">
        <div className={"w-[47px] h-[881px] flex flex-col shrink-0 border-b border-[#9fc0d6] pr-[4px] " + BAR_V}>
          <span className="h-[10px] shrink-0 pt-[3px]"><span className="block h-[3px] bg-[repeating-linear-gradient(90deg,#fff_0px,#8fa3b3_2px,transparent_3px,transparent_4px)]" /></span>
          {sideNames.map((n, i) => n[0] === "-" ? (
            <span key={i} className="h-[4px] shrink-0 ml-1"><span className="block h-[2px] bg-[#999] border-b border-white" /></span>
          ) : (
            <span key={i} className={"h-[39px] shrink-0 flex items-center justify-center ml-[2px] pr-[2px] " + (n === "term" ? PRESSED : "")}>{side[n]}</span>
          ))}
        </div>
        <div className={"ml-[2px] w-[47px] h-[202px] flex flex-col items-center shrink-0 border-b border-[#9fc0d6] pr-[4px] " + BAR_V}>
          <span className="h-[13px] self-stretch shrink-0 pt-[3px]"><span className="block h-[3px] bg-[repeating-linear-gradient(90deg,#fff_0px,#8fa3b3_2px,transparent_3px,transparent_4px)]" /></span>
          <span className="h-[38px] flex items-center"><Rot /></span>
          <span className="h-[38px] flex items-center"><Rot flip /></span>
          <div className="w-[43px] h-[24px] ml-[3px] bg-white border-t border-l border-black text-[16px] leading-[22px] shrink-0">0°</div>
          <span className="mt-[3px] h-[2px] w-[41px] ml-[3px] bg-[#999] border-b border-white shrink-0" />
          <span className="h-[41px] flex items-center shrink-0 mt-px"><Ic><path d="M0 16l9-8v5h14V8l9 8-9 8v-5H9v5z" fill="url(#arh)" stroke="#156a98" strokeWidth=".8" /></Ic></span>
          <span className="h-[38px] flex items-center"><Ic><path d="M16 0l8 9h-5v14h5l-8 9-8-9h5V9H8z" fill="url(#arv)" stroke="#156a98" strokeWidth=".8" /></Ic></span>
        </div>
        <div className="w-[121px] h-[884px] flex flex-col shrink-0">
          <div className="h-[101px] border border-[#636363] shrink-0"><Mini /></div>
          <div className="h-[4px] shrink-0 bg-[linear-gradient(180deg,#b8d6ea_50%,#fff_50%)]" />
          <div className="flex-1 border border-[#5f5f5f] flex flex-col min-h-0">
            <div className={"h-[33px] shrink-0 flex items-center pl-1 overflow-hidden " + BAR_H}>
              <span className="w-[23px] h-[23px] shrink-0 rounded-[3px] bg-[#0747d8] text-white text-[21px] leading-[23px] text-center [-webkit-text-stroke:0.500px_white]">P</span>
              <span className="ml-[5px] text-[16px] tracking-[-0.5px]">TERMINALS</span>
            </div>
            <div className="flex-1 bg-white border border-[#0078d7] text-[16px] leading-5">
              {terminals.map((t) => <div key={t} className={"h-5 pl-[2px] " + (t === "GROUND" ? "bg-[#0078d7] text-white" : "")}>{t}</div>)}
            </div>
          </div>
        </div>
        <div className="w-[4px] bg-[#b8d0e4] shrink-0" />
        <div className="w-[1694px] h-[884px] border border-[#636363] shrink-0"><Schematic /></div>
        <div className="flex-1 bg-[#b0cfe3]" />
      </div>

      <div className="h-[45px] shrink-0 flex pt-[2px] pb-0 text-[16px] bg-[#e4eaf1]">
        <div className={"w-[378px] flex items-center border-r border-[#a3c3d7] pl-px shrink-0 " + BAR_H}>
          <Grip />
          <svg viewBox="12 0 212 40" className="w-[212px] h-10 shrink-0">
            <path d="M21 4v32l33-16z" fill="url(#play)" /><path d="M73 4h5v32h-5zM82 4v32l23-16zM130 4h8v32h-8zM144 4h8v32h-8zM177 4h32v32h-32z" fill="url(#blv)" />
            <path d="M221.500 2v36" stroke="#8e969c" />
          </svg>
          <svg viewBox="0 0 32 32" className="ml-[10px] w-8 h-8 shrink-0"><circle cx="16" cy="16" r="15.500" fill="#1fa51f" /><circle cx="16" cy="12" r="11" fill="#3cc83c" fillOpacity=".7" /><text x="16" y="26" textAnchor="middle" className="font-bold text-[28px] [font-family:'Liberation_Serif',serif]" fill="#fff">i</text></svg>
          <span className="ml-[8px] whitespace-nowrap tracking-[-0.08px]">3 Message(s)</span>
        </div>
        <div className={"ml-[5px] w-[412px] flex items-center border-r border-[#a3c3d7] shrink-0 text-[#004000] " + BAR_H}><Grip /><span className="whitespace-nowrap ml-px tracking-[-0.07px]">ANIMATING: 00:00:30.650000 (CPU load 1%)</span></div>
        <div className={"ml-[5px] flex-1 flex items-center " + BAR_H}>
          <Grip /><span className="ml-px w-[37px]">x:</span><span className="w-[64px]">-5800.0</span><span className="w-[42px]">y:</span><span>+900.0</span>
          <span className="ml-auto mr-[2px] text-[#00008b]">th</span>
        </div>
      </div>

      <div className="flex-1 flex items-stretch border-t-2 border-[#b6afae] bg-[linear-gradient(90deg,#e6e0c8_0%,#dde4c8_10%,#e6e8c2_16%,#f1ecbb_22%,#efe8c0_29%,#ecdad2_35%,#ead8d2_42%,#dddad9_47%,#dadae0_58%,#ecdccd_64%,#eedccb_70%,#dddad7_76%,#dcdadb_86%,#e2d8d9_90%,#ead8cc_100%)] [font-family:'Open_Sans',sans-serif]">
        <div className="w-[496px] shrink-0 flex pl-[28px] pt-[8px]">
          <div className="relative w-[50px] h-[46px]">
            <svg viewBox="0 0 40 28" className="absolute left-0 top-[15px] w-10 h-7"><circle cx="31" cy="7" r="5" fill="#f47c20" /><path d="M8 27q-7-1-7-7 1-7 8-7 2-11 11-10 8 1 9 9 8 1 8 8-1 7-7 7z" fill="url(#cld)" /></svg>
            <span className="absolute left-[15px] top-0 h-6 px-[5px] rounded-xl bg-[#fbf8f2] text-[15.500px] leading-[24px]">84°</span>
          </div>
        </div>
        {tasks.map(([icon, st], i) => (
          <div key={i} className="w-[66.200px] shrink-0 flex flex-col items-center relative">
            <span className={"mt-[5px] h-[56px] w-[56px] flex items-center justify-center " + (st === "active" ? "bg-[#f0eeef] rounded-md" : "")}>{icon}</span>
            {(st === "dot" || st === "badge") && <span className="absolute top-[56px] w-[9px] h-[5px] rounded-t-full bg-[#777]" />}
            {st === "active" && <span className="absolute top-[56px] w-6 h-1 rounded-t-full bg-[#0078d4]" />}
            {st === "badge" && <span className="absolute left-[35px] top-[8px] w-6 h-6 rounded-full bg-[#0078d4] text-white text-[15px] leading-6 text-center">1</span>}
          </div>
        ))}
        <div className="flex-1 flex items-center pl-[103px] text-[17px] leading-[23px] text-[#1a1a1a] pt-[5px]">
          <svg viewBox="0 0 16 10" className="w-4 h-[10px] shrink-0" fill="none" stroke="#222" strokeWidth="1.700"><path d="M1 9l7-7 7 7" /></svg>
          <Ic className="ml-[28px] w-6 h-6"><path d="M8 26q-7 0-7-7 0-6 6-7Q10 4 17 5q7 1 8 8 7 1 6 7-1 6-7 6z" fill="#9a9a9a" stroke="#222" strokeWidth="1.800" /><path d="M4 23q8-9 24-2l-3 4H8z" fill="#eee" /><path d="M5 4l25 25" stroke="#222" strokeWidth="2" /></Ic>
          <Ic className="ml-[24px] w-[25px] h-[25px]"><path d="M2 13C4 2 22-1 29 9M29 1v8h-8M2 30v-8h8M3 24q4 6 12 7" stroke="#222" strokeWidth="2" /><circle cx="25" cy="24" r="8" fill="#ff9800" /></Ic>
          <Ic className="ml-[23px] w-6 h-6"><rect x="1.500" y="4.500" width="29" height="24" rx="4" stroke="#222" strokeWidth="2" /><path d="M1 19h30M16 19v9" stroke="#222" strokeWidth="2" /></Ic>
          <span className="ml-[26px] w-[38px] text-center tracking-[-0.2px]">ENG IN</span>
          <Ic className="ml-[26px] w-[25px] h-[25px]"><g stroke="#222" strokeWidth="2"><path d="M30 15A14.500 14.500 0 1 0 15 30M2 11h27M3 21h12M16 1C6 8 7 22 12 29M16 1q6 5 6 13" /><circle cx="24" cy="24" r="7.500" /><path d="M29 19l-10 10" /></g></Ic>
          <Ic className="ml-[11px] w-6 h-6"><path d="M2 11h6l7-7v24l-7-7H2zM20 11l10 10M30 11L20 21" stroke="#222" strokeWidth="2" /></Ic>
          <Ic className="ml-[12px] w-[26px] h-[26px]"><rect x="2" y="6" width="24" height="20" rx="4" stroke="#222" strokeWidth="2" /><path d="M5 9h10v14H5z" fill="#222" /><path d="M27 12l4 2v4l-4 2z" fill="#222" stroke="#222" /></Ic>
          <span className="w-[118px] text-right whitespace-nowrap shrink-0 tracking-[0.5px]">11:41<br />12-07-2024</span>
          <Ic className="ml-[10px] w-[24px] h-[26px]"><path d="M2 25l3-4V12C5-3 27-3 27 12v9l3 4z" fill="#003f94" /><path d="M12 27h8q-1 4-4 4t-4-4z" fill="#003f94" /></Ic>
          <Ic className="ml-[22px] w-[38px] h-[38px]"><path d="M9 1h11q3 0 4 3l1 4h-6l-5 17H5q-5 0-4-6L4 5q1-4 5-4z" fill="url(#cop1)" /><path d="M15 1h5q3 0 4 3l1 4h-8z" fill="#1450d8" /><path d="M19 9h7q5 0 4 6l-3 9q-1 4-5 4h-9q3-1 4-5z" fill="url(#cop2)" /><rect x="8" y="23" width="24" height="11" rx="2.500" fill="#ffc60a" /><text x="20" y="31.500" textAnchor="middle" className="font-bold text-[8.500px] [font-family:'Open_Sans',sans-serif]" fill="#111">PRE</text></Ic>
        </div>
      </div>
    </div>
  );
}
